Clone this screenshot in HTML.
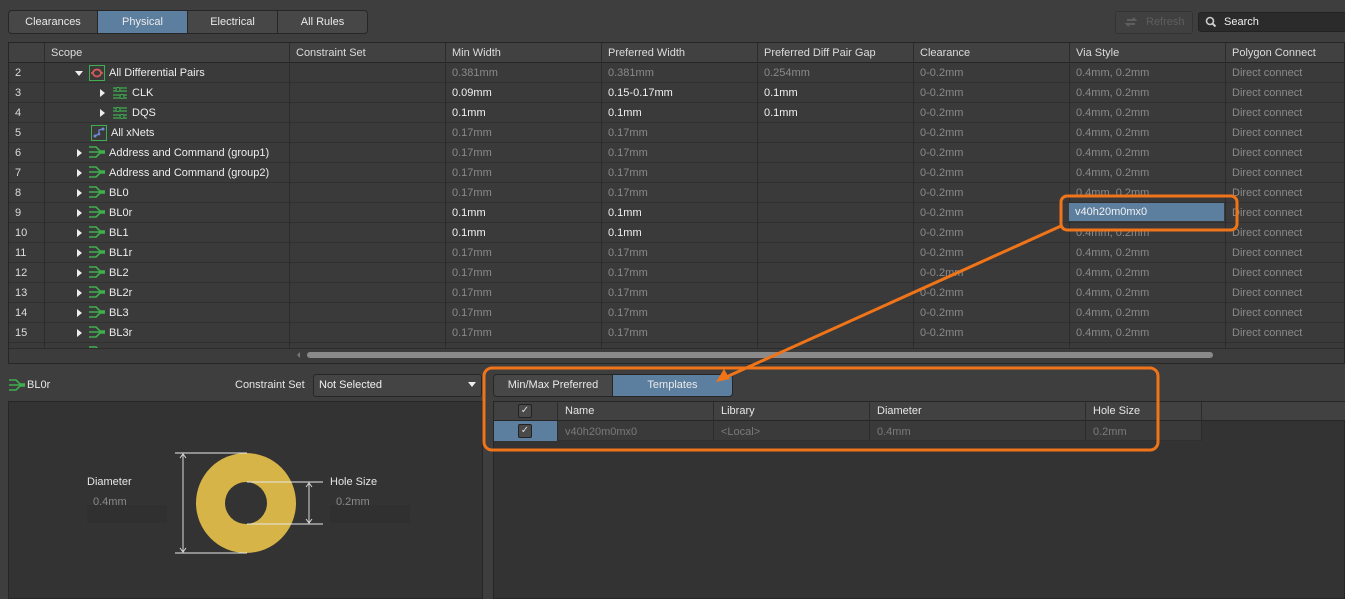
<!DOCTYPE html>
<html><head><meta charset="utf-8">
<style>
*{box-sizing:border-box;margin:0;padding:0}
body{width:1345px;height:599px;background:#3e3e3e;font-family:"Liberation Sans",sans-serif;font-size:11px;color:#e6e6e6;position:relative;overflow:hidden}
.abs{position:absolute}
.tabs{left:8px;top:10px;height:24px;display:flex;border:1px solid #262626;border-radius:4px;overflow:hidden}
.tabs div{height:22px;line-height:22px;text-align:center;background:#474747;border-right:1px solid #262626;color:#eaeaea;white-space:nowrap}
.tabs div.on{background:#5d7f9f}
.grid{left:8px;top:42px;width:1337px;height:322px;background:#3a3a3a;border:1px solid #262626;overflow:hidden}
.row{position:absolute;left:0;height:20px;width:1337px;border-bottom:1px solid #303030}
.c{position:absolute;top:0;height:20px;line-height:21px;white-space:nowrap;border-left:1px solid #2c2c2c;padding-left:6px}
.hdr{background:#414141;border-bottom:1px solid #262626;height:20px}
.hdr .c{color:#dcdcdc}
.g{color:#8a8a8a}
.w{color:#f2f2f2}
.num{left:0;width:35px;border-left:none;padding-left:6px;color:#dcdcdc}
.tri{position:absolute;width:0;height:0;border-top:4px solid transparent;border-bottom:4px solid transparent;border-left:5px solid #eee;top:6px}
.trid{position:absolute;width:0;height:0;border-left:4px solid transparent;border-right:4px solid transparent;border-top:5px solid #eee;top:8px}
</style></head><body>

<div class="abs tabs">
<div style="width:89px">Clearances</div><div class="on" style="width:90px">Physical</div><div style="width:90px">Electrical</div><div style="width:89px;border-right:none">All Rules</div>
</div>

<div class="abs" style="left:1115px;top:11px;width:78px;height:23px;border:1px solid #333;border-radius:3px;background:#404040;color:#5e5e5e;line-height:21px;padding-left:30px">Refresh</div>
<svg class="abs" style="left:1124px;top:15px" width="14" height="14" viewBox="0 0 14 14"><path d="M3 5h8l-2-2M11 9H3l2 2" stroke="#5e5e5e" stroke-width="2" fill="none"/></svg>
<div class="abs" style="left:1198px;top:12px;width:150px;height:20px;border:1px solid #222;border-radius:3px;background:#2b2b2b;color:#f0f0f0;line-height:18px;padding-left:25px">Search</div>
<svg class="abs" style="left:1205px;top:16px" width="12" height="12" viewBox="0 0 12 12"><circle cx="5" cy="5" r="3.5" stroke="#ccc" stroke-width="1.6" fill="none"/><path d="M7.5 7.5l3 3" stroke="#ccc" stroke-width="2"/></svg>

<div class="abs grid">
<div class="row hdr" style="top:0">
<div class="c num"></div>
<div class="c" style="left:35px">Scope</div>
<div class="c" style="left:280px">Constraint Set</div>
<div class="c" style="left:436px">Min Width</div>
<div class="c" style="left:592px">Preferred Width</div>
<div class="c" style="left:748px">Preferred Diff Pair Gap</div>
<div class="c" style="left:904px">Clearance</div>
<div class="c" style="left:1060px">Via Style</div>
<div class="c" style="left:1216px">Polygon Connect</div>
</div>
<div id="rows"></div>
<div style="position:absolute;left:0;top:305px;width:1337px;height:20px;background:#3c3c3c;border-top:1px solid #2c2c2c"></div>
<div style="position:absolute;left:298px;top:309px;width:906px;height:6px;border-radius:3px;background:#8a8a8a"></div>
<div style="position:absolute;left:288px;top:309px;width:0;height:0;border-top:3px solid transparent;border-bottom:3px solid transparent;border-right:3px solid #777"></div>
</div>

<!-- bottom left -->
<svg class="abs" style="left:9px;top:378px" width="16" height="14" viewBox="0 0 16 14"><path d="M0 2h7l4 4h5M0 12h7l4-4h5M0 7h16" stroke="#3fae4e" stroke-width="1.6" fill="none"/></svg>
<div class="abs" style="left:27px;top:379px">BL0r</div>
<div class="abs" style="left:235px;top:379px">Constraint Set</div>
<div class="abs" style="left:313px;top:374px;width:169px;height:23px;border:1px solid #262626;border-radius:3px;background:#444;line-height:21px;padding-left:5px;color:#f0f0f0">Not Selected</div>
<div class="abs" style="left:468px;top:382px;width:0;height:0;border-left:4px solid transparent;border-right:4px solid transparent;border-top:5px solid #eee"></div>
<div class="abs" style="left:8px;top:401px;width:475px;height:198px;background:#333;border:1px solid #262626"></div>
<svg class="abs" style="left:8px;top:401px" width="475" height="198">
<circle cx="238" cy="102" r="50" fill="#d6b447"/><circle cx="238" cy="102" r="21" fill="#333"/>
<path d="M167 52h72M167 152h72M239 81h76M239 123h76" stroke="#e8e8e8" stroke-width="1"/>
<path d="M175 53v98M172 57l3-4 3 4M172 147l3 4 3-4M301 82v40M298 86l3-4 3 4M298 118l3 4 3-4" stroke="#d8d8d8" stroke-width="1" fill="none"/>
<rect x="79" y="104" width="80" height="18" fill="#303030"/><rect x="322" y="104" width="80" height="18" fill="#303030"/>
</svg>
<div class="abs" style="left:87px;top:476px">Diameter</div>
<div class="abs g" style="left:93px;top:496px">0.4mm</div>
<div class="abs" style="left:330px;top:476px">Hole Size</div>
<div class="abs g" style="left:336px;top:496px">0.2mm</div>

<!-- bottom right -->
<div class="abs" style="left:493px;top:401px;width:852px;height:198px;background:#333;border:1px solid #262626"></div>
<div class="abs tabs" style="left:493px;top:374px;height:23px">
<div style="width:119px;height:21px;line-height:21px">Min/Max Preferred</div><div class="on" style="width:119px;height:21px;line-height:21px;border-right:none">Templates</div>
</div>
<div class="abs" style="left:494px;top:402px;width:851px;height:19px;background:#414141;border-bottom:1px solid #262626"></div>
<div class="abs" style="left:494px;top:421px;width:707px;height:20px;background:#3a3a3a;border-bottom:1px solid #303030"></div>
<div class="abs" style="left:494px;top:421px;width:63px;height:20px;background:#5d7f9f"></div>
<div class="abs" style="left:557px;top:402px;height:39px;border-left:1px solid #2c2c2c"></div>
<div class="abs" style="left:713px;top:402px;height:39px;border-left:1px solid #2c2c2c"></div>
<div class="abs" style="left:869px;top:402px;height:39px;border-left:1px solid #2c2c2c"></div>
<div class="abs" style="left:1085px;top:402px;height:39px;border-left:1px solid #2c2c2c"></div>
<div class="abs" style="left:1201px;top:402px;height:39px;border-left:1px solid #2c2c2c"></div>
<div class="abs" style="left:518px;top:404px;width:14px;height:14px;border:1px solid #222;border-radius:2px;background:#4a4a4a;color:#ddd;font-size:10px;line-height:12px;text-align:center">✓</div>
<div class="abs" style="left:518px;top:424px;width:14px;height:14px;border:1px solid #222;border-radius:2px;background:#4a4a4a;color:#ddd;font-size:10px;line-height:12px;text-align:center">✓</div>
<div class="abs" style="left:565px;top:405px">Name</div>
<div class="abs" style="left:721px;top:405px">Library</div>
<div class="abs" style="left:877px;top:405px">Diameter</div>
<div class="abs" style="left:1093px;top:405px">Hole Size</div>
<div class="abs g" style="left:565px;top:426px;color:#7a7a7a">v40h20m0mx0</div>
<div class="abs g" style="left:721px;top:426px;color:#7a7a7a">&lt;Local&gt;</div>
<div class="abs g" style="left:877px;top:426px;color:#7a7a7a">0.4mm</div>
<div class="abs g" style="left:1093px;top:426px;color:#7a7a7a">0.2mm</div>

<!-- via highlight -->
<div class="abs" style="left:1069px;top:203px;width:155px;height:18px;background:#5d7f9f;color:#f2f2f2;line-height:19px;padding-left:6px">v40h20m0mx0</div>

<!-- annotations -->
<svg class="abs" style="left:0;top:0" width="1345" height="599">
<rect x="1061" y="196" width="176" height="34" rx="6" fill="none" stroke="#f07418" stroke-width="3"/>
<rect x="484" y="368" width="674" height="82" rx="8" fill="none" stroke="#f07418" stroke-width="3"/>
<path d="M1061 226L724 378" stroke="#f07418" stroke-width="3"/>
<path d="M716 382l8-13 6 10z" fill="#f07418"/>
</svg>

<script>
const rows=[
[2,'d',0,'diff','All Differential Pairs','0.381mm','0.381mm','0.254mm',0],
[3,'r',1,'cls','CLK','0.09mm','0.15-0.17mm','0.1mm',1],
[4,'r',1,'cls','DQS','0.1mm','0.1mm','0.1mm',1],
[5,'',0,'x','All xNets','0.17mm','0.17mm','',0],
[6,'r',0,'n','Address and Command (group1)','0.17mm','0.17mm','',0],
[7,'r',0,'n','Address and Command (group2)','0.17mm','0.17mm','',0],
[8,'r',0,'n','BL0','0.17mm','0.17mm','',0],
[9,'r',0,'n','BL0r','0.1mm','0.1mm','',1],
[10,'r',0,'n','BL1','0.1mm','0.1mm','',1],
[11,'r',0,'n','BL1r','0.17mm','0.17mm','',0],
[12,'r',0,'n','BL2','0.17mm','0.17mm','',0],
[13,'r',0,'n','BL2r','0.17mm','0.17mm','',0],
[14,'r',0,'n','BL3','0.17mm','0.17mm','',0],
[15,'r',0,'n','BL3r','0.17mm','0.17mm','',0],
[16,'r',0,'n','','','','',0]];
const icons={
diff:'<svg width="16" height="16" viewBox="0 0 16 16"><rect x="0.5" y="0.5" width="15" height="15" fill="none" stroke="#3fae4e"/><path d="M2 8h2M12 8h2" stroke="#d85a5a" stroke-width="1.5"/><ellipse cx="8" cy="8" rx="4" ry="3.5" fill="none" stroke="#d85a5a" stroke-width="1.8"/></svg>',
cls:'<svg width="16" height="14" viewBox="0 0 16 14"><path d="M1 2h14M1 5h14M1 9h14M1 12h14" stroke="#3fae4e" stroke-width="1.2"/><circle cx="6" cy="3.5" r="2" fill="#3a3a3a" stroke="#3fae4e"/><circle cx="10" cy="10.5" r="2" fill="#3a3a3a" stroke="#3fae4e"/></svg>',
x:'<svg width="16" height="16" viewBox="0 0 16 16"><rect x="0.5" y="0.5" width="15" height="15" fill="none" stroke="#3fae4e"/><path d="M4 11l4-2 0-4 4-1" stroke="#6f8ad8" stroke-width="1.3" fill="none"/><circle cx="4" cy="11" r="1.5" fill="#6f8ad8"/><circle cx="12" cy="4" r="1.5" fill="#6f8ad8"/><circle cx="8" cy="9" r="1.3" fill="#6f8ad8"/></svg>',
n:'<svg width="16" height="14" viewBox="0 0 16 14"><path d="M0 2h7l4 4h5M0 12h7l4-4h5M0 7h16" stroke="#3fae4e" stroke-width="1.6" fill="none"/></svg>'};
let h='';
rows.forEach((r,i)=>{
 const top=20+i*20;
 const ind=r[2]?23:0;
 let sc='';
 if(r[1]=='d')sc+=`<div class="trid" style="left:${30+ind}px"></div>`;
 if(r[1]=='r')sc+=`<div class="tri" style="left:${32+ind}px"></div>`;
 let il=r[3]=='x'?46:44+ind;
 sc+=`<div style="position:absolute;left:${il}px;top:${r[3]=='cls'?3:2}px">${icons[r[3]]}</div>`;
 sc+=`<div style="position:absolute;left:${il+(r[3]=='x'?20:20)}px;top:0;line-height:21px;color:#eee">${r[4]}</div>`;
 const cc=r[8]?'w':'g';
 const last=i==14;
 h+=`<div class="row" style="top:${top}px"><div class="c num">${r[0]}</div>
 <div class="c" style="left:35px;width:245px">${sc}</div>
 <div class="c" style="left:280px"></div>
 <div class="c ${cc}" style="left:436px">${r[5]}</div>
 <div class="c ${cc}" style="left:592px">${r[6]}</div>
 <div class="c ${r[0]==2?'g':'w'}" style="left:748px">${r[7]}</div>
 <div class="c g" style="left:904px">${last?'':'0-0.2mm'}</div>
 <div class="c g" style="left:1060px">${last?'':'0.4mm, 0.2mm'}</div>
 <div class="c g" style="left:1216px">${last?'':'Direct connect'}</div></div>`;
});
document.getElementById('rows').innerHTML=h;
</script>
</body></html>
